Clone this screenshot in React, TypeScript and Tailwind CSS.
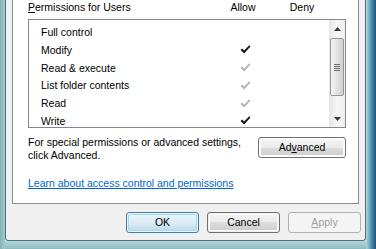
import React from "react";

function Check({ gray }: { gray?: boolean }) {
  return (
    <svg width="11" height="9" viewBox="0 0 10 8">
      <path
        d="M0.5 4.4 L1.9 3.1 L3.7 4.9 L8.4 0.2 L9.5 1.2 L3.8 7.7 Z"
        fill={gray ? "#b4b4b4" : "#161616"}
      />
    </svg>
  );
}

const rows: { name: string; allow: "none" | "black" | "gray" }[] = [
  { name: "Full control", allow: "none" },
  { name: "Modify", allow: "black" },
  { name: "Read & execute", allow: "gray" },
  { name: "List folder contents", allow: "gray" },
  { name: "Read", allow: "gray" },
  { name: "Write", allow: "black" },
];

function Btn({
  children,
  kind,
  className = "",
}: {
  children: React.ReactNode;
  kind: "normal" | "default" | "disabled";
  className?: string;
}) {
  const base =
    "h-[21px] rounded-[3px] border flex items-center justify-center p-[1px] ";
  if (kind === "default") {
    return (
      <div className={base + "border-[#3c7fb1] " + className}>
        <div className="w-full h-full rounded-[2px] border border-[#9fdcf5] bg-gradient-to-b from-[#eaf4fa] via-[#dcecf6] to-[#c4dcea] flex items-center justify-center">
          {children}
        </div>
      </div>
    );
  }
  if (kind === "disabled") {
    return (
      <div
        className={
          base +
          "border-[#adb2b5] bg-[#f4f4f4] text-[#a0a0a0] " +
          className
        }
      >
        {children}
      </div>
    );
  }
  return (
    <div className={base + "border-[#707070] " + className}>
      <div className="w-full h-full rounded-[2px] border border-[#fbfbfb] bg-[linear-gradient(to_bottom,#f2f2f2_0%,#ebebeb_50%,#dddddd_50%,#cfcfcf_100%)] flex items-center justify-center">
        {children}
      </div>
    </div>
  );
}

export default function App() {
  return (
    <div className="w-[376px] h-[249px] overflow-hidden flex text-[10.5px] text-black [font-family:'Liberation_Sans',Arial,sans-serif]">
      {/* left frame */}
      <div className="w-[5px] h-full bg-gradient-to-r from-[#84b0b7] to-[#a6cbd0]" />
      {/* center column */}
      <div className="flex-1 flex flex-col">
        <div className="flex-1 bg-[#f0f0f0] border-l border-r border-b border-[#4f6f79] rounded-bl-[3px] rounded-br-[3px] flex flex-col">
          {/* tab page */}
          <div className="ml-[6px] mr-[6px] h-[204px] bg-white border-l border-r border-b border-[#898c95] flex flex-col">
            {/* header */}
            <div className="ml-[15px] mt-[1px] h-[13px] leading-[13px] flex">
              <span className="w-[195px]">
                <span className="underline underline-offset-[1px]">P</span>
                ermissions for Users
              </span>
              <span className="w-[40px] text-center">Allow</span>
              <span className="ml-[19px] w-[40px] text-center">Deny</span>
            </div>
            {/* listbox */}
            <div className="ml-[15px] mt-[5px] w-[318px] h-[109px] border border-[#828790] bg-white flex overflow-hidden">
              <div className="flex-1 pt-[3px] overflow-hidden">
                {rows.map((r) => (
                  <div key={r.name} className="flex h-[17.8px] items-center">
                    <span className="w-[196px] pl-[12px] leading-[18px] whitespace-nowrap">
                      {r.name}
                    </span>
                    <span className="w-[40px] flex justify-center">
                      {r.allow !== "none" && <Check gray={r.allow === "gray"} />}
                    </span>
                  </div>
                ))}
              </div>
              {/* scrollbar */}
              <div className="w-[16px] flex flex-col bg-gradient-to-r from-[#e6e6e6] via-[#f6f6f6] to-[#eeeeee]">
                <div className="h-[17px] flex items-center justify-center">
                  <svg width="7" height="4" viewBox="0 0 7 4">
                    <polygon points="0,4 3.5,0 7,4" fill="#3a3a3a" />
                  </svg>
                </div>
                <div className="mt-[1px] mx-[1px] h-[58px] rounded-[2px] border border-[#979797] bg-gradient-to-r from-[#f3f3f3] via-[#e2e2e2] to-[#cfcfcf] flex flex-col items-center justify-center gap-[1px]">
                  {[0, 1, 2, 3].map((i) => (
                    <div key={i} className="w-[6px] h-[1px] bg-[#6e6e6e]" />
                  ))}
                </div>
                <div className="flex-1" />
                <div className="h-[17px] flex items-center justify-center">
                  <svg width="7" height="4" viewBox="0 0 7 4">
                    <polygon points="0,0 3.5,4 7,0" fill="#3a3a3a" />
                  </svg>
                </div>
              </div>
            </div>
            {/* advanced row */}
            <div className="ml-[15px] mr-[12px] mt-[8px] flex justify-between">
              <div className="leading-[13px]">
                <div>For special permissions or advanced settings,</div>
                <div>click Advanced.</div>
              </div>
              <Btn kind="normal" className="mt-[1px] w-[88px]">
                <span>
                  Ad<span className="underline underline-offset-[1px]">v</span>
                  anced
                </span>
              </Btn>
            </div>
            {/* link */}
            <div className="ml-[15px] mt-[15px] leading-[13px] text-[#0066cc] underline underline-offset-[1px]">
              Learn about access control and permissions
            </div>
          </div>
          {/* buttons */}
          <div className="mt-[8px] pr-[4px] flex justify-end gap-[8px]">
            <Btn kind="default" className="w-[73px]">
              OK
            </Btn>
            <Btn kind="normal" className="w-[73px]">
              Cancel
            </Btn>
            <Btn kind="disabled" className="w-[73px]">
              <span>
                <span className="underline underline-offset-[1px]">A</span>pply
              </span>
            </Btn>
          </div>
        </div>
        {/* bottom frame */}
        <div className="h-[8px] bg-gradient-to-b from-[#b1d6db] to-[#8dbbc3]" />
      </div>
      {/* right frame */}
      <div className="w-[10px] h-full bg-gradient-to-r from-[#b6d7df] via-[#4f93b4] to-[#1d5675]" />
    </div>
  );
}
